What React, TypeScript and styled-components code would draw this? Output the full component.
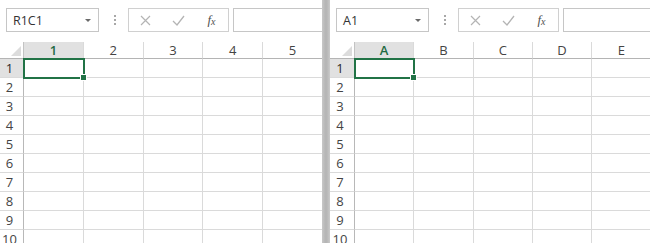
import React from 'react'
import styled, { createGlobalStyle } from 'styled-components'

const GlobalStyle = createGlobalStyle`
  html, body {
    margin: 0;
    padding: 0;
    background: #ffffff;
  }
  body {
    font-family: "Open Sans", "Noto Sans", sans-serif;
    overflow: hidden;
  }
`

interface SheetProps {
  nameBox: string
  columns: string[]
  rowHeaderWidth: number
  colWidth: number
}

const ROWS = 10

function FormulaBar({ nameBox }: { nameBox: string }) {
  return (
    <Toolbar>
      <NameBox>
        <NameText>{nameBox}</NameText>
        <DropArrow />
      </NameBox>
      <DotsWrap>
        <Dots>
          <Dot />
          <Dot />
          <Dot />
        </Dots>
      </DotsWrap>
      <ButtonsBox>
        <IconSlot>
          <svg width="11" height="11" viewBox="0 0 11 11">
            <path d="M1 1 L10 10 M10 1 L1 10" stroke="#b4b4b4" strokeWidth="1.2" fill="none" />
          </svg>
        </IconSlot>
        <IconSlot>
          <svg width="13" height="11" viewBox="0 0 13 11">
            <path d="M1 6 L5 10 L12 1" stroke="#b4b4b4" strokeWidth="1.3" fill="none" />
          </svg>
        </IconSlot>
        <IconSlot>
          <Fx>
            f<sub>x</sub>
          </Fx>
        </IconSlot>
      </ButtonsBox>
      <FormulaInput />
    </Toolbar>
  )
}

function Sheet({ nameBox, columns, rowHeaderWidth, colWidth }: SheetProps) {
  const template = `${rowHeaderWidth}px repeat(${columns.length}, ${colWidth}px)`
  return (
    <Panel>
      <FormulaBar nameBox={nameBox} />
      <Grid style={{ gridTemplateColumns: template }}>
        <Corner>
          <CornerTriangle />
        </Corner>
        {columns.map((c, i) => (
          <ColHeader key={c} $selected={i === 0}>
            {c}
          </ColHeader>
        ))}
        {Array.from({ length: ROWS }).map((_, r) => (
          <React.Fragment key={r}>
            <RowHeader $selected={r === 0}>{r + 1}</RowHeader>
            {columns.map((c, i) => (
              <Cell key={c} $active={r === 0 && i === 0}>
                {r === 0 && i === 0 && <FillHandle />}
              </Cell>
            ))}
          </React.Fragment>
        ))}
      </Grid>
    </Panel>
  )
}

export default function App() {
  return (
    <>
      <GlobalStyle />
      <Page>
        <LeftPane>
          <Sheet nameBox="R1C1" columns={['1', '2', '3', '4', '5']} rowHeaderWidth={24} colWidth={59.8} />
        </LeftPane>
        <Divider />
        <RightPane>
          <Sheet nameBox="A1" columns={['A', 'B', 'C', 'D', 'E']} rowHeaderWidth={25} colWidth={59.3} />
        </RightPane>
      </Page>
    </>
  )
}

const Page = styled.div`
  display: flex;
  width: 650px;
  height: 243px;
  overflow: hidden;
`

const LeftPane = styled.div`
  width: 322px;
  flex-shrink: 0;
  overflow: hidden;
`

const RightPane = styled.div`
  flex: 1;
  overflow: hidden;
`

const Divider = styled.div`
  width: 8px;
  flex-shrink: 0;
  background: linear-gradient(to right, #c8c8c8, #b6b6b6 40%, #b6b6b6 60%, #cacaca);
`

const Panel = styled.div`
  display: flex;
  flex-direction: column;
`

const Toolbar = styled.div`
  display: flex;
  align-items: flex-start;
  height: 42px;
  padding: 8px 0 0 6px;
  box-sizing: border-box;
  white-space: nowrap;
`

const NameBox = styled.div`
  width: 93px;
  height: 24px;
  box-sizing: border-box;
  border: 1px solid #c6c6c6;
  display: flex;
  align-items: center;
  justify-content: space-between;
  padding: 0 7px 0 6px;
  flex-shrink: 0;
`

const NameText = styled.span`
  font-size: 12.5px;
  color: #333333;
`

const DropArrow = styled.span`
  width: 0;
  height: 0;
  border-left: 3px solid transparent;
  border-right: 3px solid transparent;
  border-top: 3px solid #6a6a6a;
`

const DotsWrap = styled.div`
  width: 29px;
  height: 24px;
  display: flex;
  align-items: center;
  justify-content: center;
  flex-shrink: 0;
`

const Dots = styled.div`
  display: flex;
  flex-direction: column;
  gap: 2px;
  margin-left: 2px;
`

const Dot = styled.span`
  width: 2px;
  height: 2px;
  background: #a8a8a8;
`

const ButtonsBox = styled.div`
  width: 101px;
  height: 24px;
  box-sizing: border-box;
  border: 1px solid #d0d0d0;
  display: flex;
  align-items: center;
  flex-shrink: 0;
`

const IconSlot = styled.div`
  flex: 1;
  display: flex;
  align-items: center;
  justify-content: center;
  height: 100%;
`

const Fx = styled.span`
  font-family: "Liberation Serif", serif;
  font-style: italic;
  font-size: 13px;
  color: #505050;
  line-height: 1;

  sub {
    font-size: 10px;
    vertical-align: -1px;
  }
`

const FormulaInput = styled.div`
  width: 400px;
  height: 24px;
  margin-left: 4px;
  box-sizing: border-box;
  border: 1px solid #c6c6c6;
  flex-shrink: 0;
`

const Grid = styled.div`
  display: grid;
  grid-auto-rows: 19px;
  grid-template-rows: 17px;
`

const Corner = styled.div`
  position: relative;
  border-right: 1px solid #c3c3c3;
  border-bottom: 1px solid #b4b4b4;
  box-sizing: border-box;
`

const CornerTriangle = styled.span`
  position: absolute;
  right: 2px;
  bottom: 2px;
  width: 0;
  height: 0;
  border-left: 10px solid transparent;
  border-bottom: 10px solid #dcdcdc;
`

const ColHeader = styled.div<{ $selected?: boolean }>`
  display: flex;
  align-items: center;
  justify-content: center;
  font-size: 13px;
  color: ${(p) => (p.$selected ? '#1f6b43' : '#444444')};
  font-weight: ${(p) => (p.$selected ? 600 : 400)};
  background: ${(p) => (p.$selected ? '#e1e1e1' : '#ffffff')};
  border-right: 1px solid #dadada;
  border-bottom: 1px solid #b4b4b4;
  box-sizing: border-box;
`

const RowHeader = styled.div<{ $selected?: boolean }>`
  display: flex;
  align-items: center;
  justify-content: center;
  font-size: 13px;
  color: ${(p) => (p.$selected ? '#2b2b2b' : '#444444')};
  background: ${(p) => (p.$selected ? '#e1e1e1' : '#ffffff')};
  border-right: 1px solid #b8b8b8;
  border-bottom: 1px solid #dadada;
  box-sizing: border-box;
  padding-right: 4px;
`

const Cell = styled.div<{ $active?: boolean }>`
  position: relative;
  border-right: 1px solid #dadada;
  border-bottom: 1px solid #dadada;
  box-sizing: border-box;
  ${(p) =>
    p.$active &&
    `
    z-index: 1;
    outline: 2px solid #217346;
    outline-offset: -1px;
  `}
`

const FillHandle = styled.span`
  position: absolute;
  right: -4px;
  bottom: -4px;
  width: 5px;
  height: 5px;
  background: #217346;
  border: 1px solid #ffffff;
`
